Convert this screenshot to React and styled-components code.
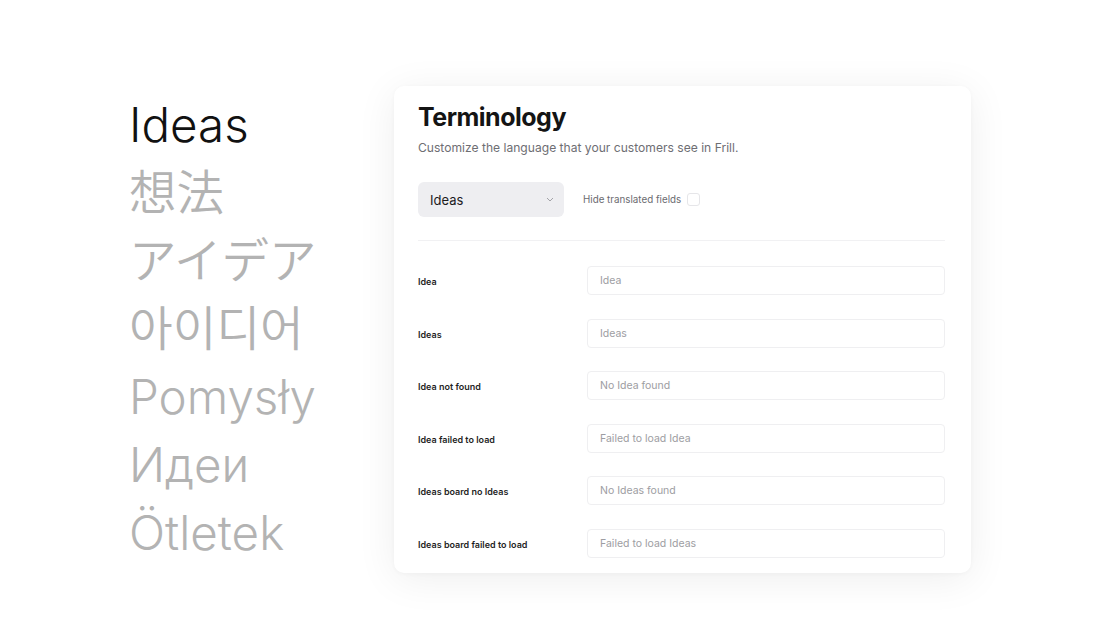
import React from "react";
import styled, { createGlobalStyle } from "styled-components";

const fields = [
  { label: "Idea", placeholder: "Idea" },
  { label: "Ideas", placeholder: "Ideas" },
  { label: "Idea not found", placeholder: "No Idea found" },
  { label: "Idea failed to load", placeholder: "Failed to load Idea" },
  { label: "Ideas board no Ideas", placeholder: "No Ideas found" },
  { label: "Ideas board failed to load", placeholder: "Failed to load Ideas" },
];

const words = ["想法", "アイデア", "아이디어", "Pomysły", "Идеи", "Ötletek"];

const App = () => {
  return (
    <Page>
      <GlobalStyle />
      <Words>
        <Word $active>Ideas</Word>
        {words.map((w) => (
          <Word key={w}>{w}</Word>
        ))}
      </Words>
      <Card>
        <Title>Terminology</Title>
        <Subtitle>Customize the language that your customers see in Frill.</Subtitle>
        <Toolbar>
          <Select>
            <span>Ideas</span>
            <svg width="8" height="5" viewBox="0 0 8 5">
              <polyline points="1,1 4,4 7,1" fill="none" stroke="#a3a3a8" strokeWidth="1" />
            </svg>
          </Select>
          <Toggle>
            Hide translated fields
            <Checkbox />
          </Toggle>
        </Toolbar>
        <Divider />
        <Fields>
          {fields.map((f) => (
            <Row key={f.label}>
              <Label>{f.label}</Label>
              <Input placeholder={f.placeholder} />
            </Row>
          ))}
        </Fields>
      </Card>
    </Page>
  );
};

const GlobalStyle = createGlobalStyle`
  body {
    margin: 0;
    background: #ffffff;
    font-family: Inter, "Noto Sans", sans-serif;
  }
`;

const Page = styled.div`
  display: flex;
  width: 1100px;
  height: 640px;
  padding: 86px 0 0 129px;
  box-sizing: border-box;
`;

const Words = styled.div`
  width: 265px;
  margin-top: 5px;
  display: flex;
  flex-direction: column;
`;

const Word = styled.div`
  font-family: Inter, "Noto Sans CJK JP", "Noto Sans CJK KR", sans-serif;
  font-size: 47.5px;
  line-height: 68px;
  font-weight: 350;
  color: ${(p) => (p.$active ? "#111111" : "#b3b3b3")};
  white-space: nowrap;
`;

const Card = styled.div`
  width: 577px;
  height: 487px;
  box-sizing: border-box;
  padding: 15px 26px 14px 24px;
  background: #ffffff;
  border-radius: 10px;
  box-shadow: 0 6px 40px rgba(0, 0, 0, 0.07), 0 1px 4px rgba(0, 0, 0, 0.03);
  overflow: hidden;
`;

const Title = styled.h1`
  margin: 0;
  font-size: 25px;
  line-height: 32px;
  font-weight: 700;
  color: #141414;
  letter-spacing: -0.5px;
`;

const Subtitle = styled.p`
  margin: 6px 0 0;
  font-size: 12.1px;
  line-height: 18px;
  color: #6e6e73;
`;

const Toolbar = styled.div`
  display: flex;
  align-items: center;
  gap: 19px;
  margin-top: 25px;
`;

const Select = styled.div`
  width: 146px;
  height: 35px;
  box-sizing: border-box;
  padding: 0 10px 0 12px;
  display: flex;
  align-items: center;
  justify-content: space-between;
  background: #eeeef1;
  border-radius: 6px;
  font-size: 13px;
  color: #1c1c1e;
`;

const Toggle = styled.label`
  display: flex;
  align-items: center;
  gap: 6px;
  font-size: 9.8px;
  color: #6b6b70;
`;

const Checkbox = styled.span`
  width: 11px;
  height: 11px;
  border: 1px solid #e6e6e9;
  border-radius: 3px;
`;

const Divider = styled.hr`
  margin: 23px 0 0;
  border: none;
  border-top: 1px solid #f1f1f3;
`;

const Fields = styled.div`
  display: flex;
  flex-direction: column;
  gap: 23.6px;
  margin-top: 25px;
`;

const Row = styled.div`
  display: grid;
  grid-template-columns: 169px 1fr;
  align-items: center;
`;

const Label = styled.span`
  font-size: 9px;
  font-weight: 600;
  color: #1f1f1f;
  padding-top: 2px;
`;

const Input = styled.input`
  height: 29px;
  box-sizing: border-box;
  padding: 0 12px;
  border: 1px solid #efeff1;
  border-radius: 4px;
  font-family: Inter, sans-serif;
  font-size: 10.5px;
  outline: none;
  &::placeholder {
    color: #9d9da2;
  }
`;

export default App;
